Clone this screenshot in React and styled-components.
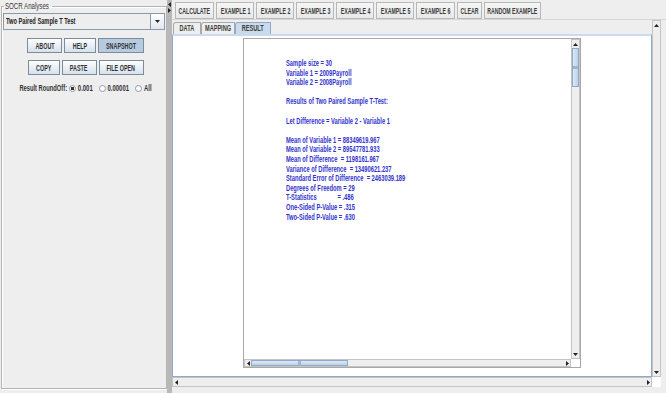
import styled, { createGlobalStyle } from "styled-components";

const GlobalStyle = createGlobalStyle`
  html, body {
    margin: 0;
    padding: 0;
    background: #eeeeee;
  }
  body {
    font-family: "Liberation Sans", Arial, sans-serif;
  }
`;

// the Java UI font is very condensed; squeeze glyphs horizontally
const Squeeze = styled.span`
  display: inline-block;
  flex: none;
  white-space: pre;
  transform: scaleX(${(p) => p.$x ?? 0.6});
  transform-origin: ${(p) => p.$origin ?? "center"};
`;

const Label = styled.span`
  display: inline-flex;
  justify-content: center;
  width: ${(p) => p.$w}px;
  flex: none;
`;

const Frame = styled.div`
  display: flex;
  width: 666px;
  height: 393px;
  background: #eeeeee;
  overflow: hidden;
`;

const LeftColumn = styled.div`
  width: 167px;
  display: flex;
  padding: 0 0 4px 1px;
  box-sizing: border-box;
`;

const TitledPanel = styled.fieldset`
  flex: 1;
  min-width: 0;
  margin: 0;
  padding: 0 1px;
  border: 1px solid #b4b4b4;
  box-shadow: inset 1px 1px 0 #ffffff, 1px 1px 0 #ffffff;
  display: flex;
  flex-direction: column;
`;

const Legend = styled.legend`
  width: 46px;
  margin-left: 1px;
  padding: 0 1px;
  white-space: nowrap;
  font-size: 9px;
  line-height: 13px;
  color: #333333;
`;

const Combo = styled.div`
  display: flex;
  height: 17px;
  border: 1px solid #8c9aa8;
  background: #eeeeee;
  box-sizing: border-box;
`;

const ComboText = styled.span`
  flex: 1;
  padding-left: 2px;
  overflow: hidden;
  font-size: 9px;
  font-weight: bold;
  line-height: 15px;
  color: #222222;
`;

const ComboButton = styled.span`
  width: 13px;
  border-left: 1px solid #8c9aa8;
  display: flex;
  align-items: center;
  justify-content: center;
  background: linear-gradient(#ffffff, #dfe7ef);
`;

const ButtonRow = styled.div`
  display: flex;
  justify-content: center;
  gap: 2px;
  margin-top: ${(p) => p.$top}px;
  padding-left: 3px;
`;

const PanelButton = styled.button`
  width: ${(p) => p.$w}px;
  height: 15px;
  padding: 0;
  display: flex;
  align-items: center;
  justify-content: center;
  border: 1px solid #7d8c9c;
  background: ${(p) =>
    p.$active ? "#b6cbe0" : "linear-gradient(#fdfeff, #d6e1ec)"};
  font-family: inherit;
  font-size: 9px;
  font-weight: bold;
  color: #333333;
`;

const RadioRow = styled.div`
  display: flex;
  align-items: center;
  justify-content: center;
  margin-top: 8px;
  padding-left: 3px;
  font-size: 9px;
  font-weight: bold;
  line-height: 11px;
  color: #333333;
`;

const RadioOption = styled.span`
  display: flex;
  align-items: center;
  gap: 1px;
  margin-left: ${(p) => p.$gap}px;
`;

const RadioDot = styled.span`
  width: 5px;
  height: 5px;
  border: 1px solid #8c9aa8;
  border-radius: 50%;
  background: ${(p) =>
    p.$checked
      ? "radial-gradient(circle, #333 0 1.5px, #ffffff 1.9px)"
      : "#ffffff"};
`;

const Splitter = styled.div`
  width: 5px;
  display: flex;
  flex-direction: column;
  align-items: center;
  gap: 1px;
  padding-top: 2px;
  box-sizing: border-box;
  background-image: radial-gradient(#b4b4b4 0.7px, transparent 0.8px);
  background-size: 2px 2px;
`;

const RightColumn = styled.div`
  flex: 1;
  display: flex;
  flex-direction: column;
`;

const Toolbar = styled.div`
  display: flex;
  gap: 2px;
  height: 20px;
  padding: 2px 0 0 3px;
  box-sizing: border-box;
  border-bottom: 1px solid #d6d6d6;
`;

const ToolButton = styled.button`
  width: ${(p) => p.$w}px;
  height: 17px;
  padding: 0;
  display: flex;
  align-items: center;
  justify-content: center;
  border: 1px solid #b8b8b8;
  background: linear-gradient(#f6f6f6, #e8e8e8);
  font-family: inherit;
  font-size: 9px;
  font-weight: bold;
  color: #3c3c3c;
`;

const Workspace = styled.div`
  display: grid;
  grid-template-columns: 480px 9px;
  grid-template-rows: 357px 10px;
`;

const TabbedPane = styled.div`
  display: flex;
  flex-direction: column;
`;

const TabStrip = styled.div`
  display: flex;
  align-items: flex-end;
  height: 14px;
  padding-left: 1px;
`;

const Tab = styled.div`
  width: ${(p) => p.$w}px;
  height: 11px;
  display: flex;
  justify-content: center;
  border: 1px solid ${(p) => (p.$selected ? "#8ea9cc" : "#a8a8a8")};
  border-bottom: none;
  border-radius: 3px 0 0 0;
  background: ${(p) => (p.$selected ? "#c9dbec" : "#eeeeee")};
  font-size: 9px;
  font-weight: bold;
  line-height: 11px;
  color: #3c3c3c;
`;

const TabContent = styled.div`
  flex: 1;
  display: flex;
  justify-content: center;
  align-items: flex-start;
  padding-top: 2px;
  border: 1px solid #8ea9cc;
  border-top-width: 2px;
  border-top-color: #c9dbec;
  background: #ffffff;
`;

const ResultPane = styled.div`
  width: 338px;
  height: 330px;
  box-sizing: border-box;
  border: 1px solid #a8a8a8;
  display: grid;
  grid-template-columns: 1fr 9px;
  grid-template-rows: 1fr 8px;
`;

const ResultText = styled.div`
  padding: 20px 0 0 42px;
  overflow: hidden;
  color: #3333cc;
  font-size: 9px;
  font-weight: bold;
  line-height: 9.6px;
`;

const Line = styled.div`
  height: 9.6px;
`;

const ScrollBar = styled.div`
  display: flex;
  flex-direction: ${(p) => (p.$vertical ? "column" : "row")};
  background: #eeeeee;
  border: 1px solid #c4c4c4;
  box-sizing: border-box;
`;

const ArrowButton = styled.div`
  flex: none;
  width: ${(p) => (p.$vertical ? "auto" : "6px")};
  height: ${(p) => (p.$vertical ? "8px" : "auto")};
  display: flex;
  align-items: center;
  justify-content: center;
  background: #eeeeee;
`;

const Track = styled.div`
  flex: 1;
  display: flex;
  flex-direction: ${(p) => (p.$vertical ? "column" : "row")};
`;

const TrackSpace = styled.div`
  flex: none;
  flex-basis: ${(p) => p.$size}%;
`;

const Thumb = styled.div`
  flex: none;
  flex-basis: ${(p) => p.$size}%;
  display: flex;
  align-items: center;
  justify-content: center;
  box-sizing: border-box;
  border: 1px solid #8ea9cc;
  background: linear-gradient(
    ${(p) => (p.$vertical ? "90deg" : "180deg")},
    #dde9f6,
    #bcd2e9
  );

  &::after {
    content: "";
    width: ${(p) => (p.$vertical ? "5px" : "3px")};
    height: ${(p) => (p.$vertical ? "3px" : "5px")};
    background: #9fb6d0;
  }
`;

const Corner = styled.div`
  background: #ffffff;
`;

function Arrow({ dir }) {
  const shapes = {
    up: { w: 5, h: 3, pts: "0,3 2.5,0 5,3" },
    down: { w: 5, h: 3, pts: "0,0 5,0 2.5,3" },
    left: { w: 3, h: 5, pts: "3,0 3,5 0,2.5" },
    right: { w: 3, h: 5, pts: "0,0 3,2.5 0,5" },
  };
  const s = shapes[dir];
  return (
    <svg width={s.w} height={s.h} viewBox={`0 0 ${s.w} ${s.h}`}>
      <polygon points={s.pts} fill="#222222" />
    </svg>
  );
}

function Scroll({ vertical, thumb }) {
  return (
    <ScrollBar $vertical={vertical}>
      <ArrowButton $vertical={vertical}>
        <Arrow dir={vertical ? "up" : "left"} />
      </ArrowButton>
      <Track $vertical={vertical}>
        {thumb && (
          <>
            <TrackSpace $size={thumb.offset} />
            <Thumb $vertical={vertical} $size={thumb.size} />
          </>
        )}
      </Track>
      <ArrowButton $vertical={vertical}>
        <Arrow dir={vertical ? "down" : "right"} />
      </ArrowButton>
    </ScrollBar>
  );
}

const TOOL_BUTTONS = [
  ["CALCULATE", 39],
  ["EXAMPLE 1", 38],
  ["EXAMPLE 2", 38],
  ["EXAMPLE 3", 38],
  ["EXAMPLE 4", 38],
  ["EXAMPLE 5", 38],
  ["EXAMPLE 6", 39],
  ["CLEAR", 25],
  ["RANDOM EXAMPLE", 57],
];

const TABS = [
  ["DATA", 26],
  ["MAPPING", 32],
  ["RESULT", 34],
];

const ROUND_OFF = [
  ["0.001", 16, 2, true],
  ["0.00001", 23, 6, false],
  ["All", 9, 5, false],
];

const RESULT_LINES = [
  "Sample size = 30",
  "Variable 1 = 2009Payroll",
  "Variable 2 = 2008Payroll",
  "",
  "Results of Two Paired Sample T-Test:",
  "",
  "Let Difference = Variable 2 - Variable 1",
  "",
  "Mean of Variable 1 = 88349619.967",
  "Mean of Variable 2 = 89547781.933",
  "Mean of Difference  = 1198161.967",
  "Variance of Difference  = 13490621.237",
  "Standard Error of Difference  = 2463039.189",
  "Degrees of Freedom = 29",
  "T-Statistics             = .486",
  "One-Sided P-Value = .315",
  "Two-Sided P-Value = .630",
];

export default function App() {
  return (
    <>
      <GlobalStyle />
      <Frame>
        <LeftColumn>
          <TitledPanel>
            <Legend>
              <Squeeze $x={0.68} $origin="left">
                SOCR Analyses
              </Squeeze>
            </Legend>
            <Combo>
              <ComboText>
                <Squeeze $x={0.63} $origin="left">
                  Two Paired Sample T Test
                </Squeeze>
              </ComboText>
              <ComboButton>
                <Arrow dir="down" />
              </ComboButton>
            </Combo>
            <ButtonRow $top={8}>
              <PanelButton $w={35}>
                <Squeeze>ABOUT</Squeeze>
              </PanelButton>
              <PanelButton $w={32}>
                <Squeeze>HELP</Squeeze>
              </PanelButton>
              <PanelButton $w={46} $active>
                <Squeeze>SNAPSHOT</Squeeze>
              </PanelButton>
            </ButtonRow>
            <ButtonRow $top={7}>
              <PanelButton $w={32}>
                <Squeeze>COPY</Squeeze>
              </PanelButton>
              <PanelButton $w={35}>
                <Squeeze>PASTE</Squeeze>
              </PanelButton>
              <PanelButton $w={45}>
                <Squeeze>FILE OPEN</Squeeze>
              </PanelButton>
            </ButtonRow>
            <RadioRow>
              <Label $w={48}>
                <Squeeze $x={0.64}>Result RoundOff:</Squeeze>
              </Label>
              {ROUND_OFF.map(([label, w, gap, checked]) => (
                <RadioOption key={label} $gap={gap}>
                  <RadioDot $checked={checked} />
                  <Label $w={w}>
                    <Squeeze $x={0.66}>{label}</Squeeze>
                  </Label>
                </RadioOption>
              ))}
            </RadioRow>
          </TitledPanel>
        </LeftColumn>

        <Splitter>
          <Arrow dir="left" />
          <Arrow dir="right" />
        </Splitter>

        <RightColumn>
          <Toolbar>
            {TOOL_BUTTONS.map(([label, w]) => (
              <ToolButton key={label} $w={w}>
                <Squeeze $x={0.58}>{label}</Squeeze>
              </ToolButton>
            ))}
          </Toolbar>
          <Workspace>
            <TabbedPane>
              <TabStrip>
                {TABS.map(([label, w]) => (
                  <Tab key={label} $w={w} $selected={label === "RESULT"}>
                    <Squeeze $x={0.62}>{label}</Squeeze>
                  </Tab>
                ))}
              </TabStrip>
              <TabContent>
                <ResultPane>
                  <ResultText>
                    {RESULT_LINES.map((line, i) => (
                      <Line key={i}>
                        <Squeeze $x={0.64} $origin="left">
                          {line}
                        </Squeeze>
                      </Line>
                    ))}
                  </ResultText>
                  <Scroll vertical thumb={{ offset: 0, size: 13 }} />
                  <Scroll thumb={{ offset: 0, size: 31 }} />
                  <Corner />
                </ResultPane>
              </TabContent>
            </TabbedPane>
            <Scroll vertical />
            <Scroll />
            <Corner />
          </Workspace>
        </RightColumn>
      </Frame>
    </>
  );
}
